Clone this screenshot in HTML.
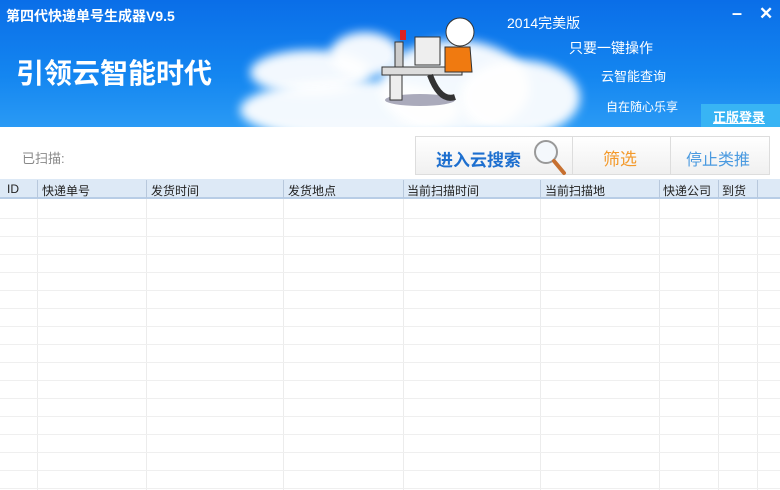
<!DOCTYPE html><html><head><meta charset="utf-8"><style>
*{margin:0;padding:0;box-sizing:border-box}
body{width:780px;height:490px;overflow:hidden;background:#fff;font-family:"Liberation Sans","Noto Sans CJK SC",sans-serif;position:relative}
.banner{position:absolute;left:0;top:0;width:780px;height:127px;background:linear-gradient(180deg,#0a6ee8 0%,#1486f0 60%,#2a9af5 100%);overflow:hidden}
.t{position:absolute;color:#fff;white-space:nowrap}
.cloud{position:absolute;background:#fff;border-radius:50%;filter:blur(5px);opacity:.95}
.hdr{position:absolute;top:179px;left:0;width:780px;height:20px;background:#dde9f6;border-bottom:2px solid #b8cde6;font-size:12px;color:#222}
.hdr span{position:absolute;top:3px}
.vl{position:absolute;top:199px;width:1px;height:291px;background:#ececec}
.hl{position:absolute;left:0;width:780px;height:1px;background:#efefef}
.hv{position:absolute;top:180px;width:1px;height:18px;background:#b8c8dc}
</style></head><body>
<div class="banner">
<div class="cloud" style="left:250px;top:50px;width:120px;height:45px"></div>
<div class="cloud" style="left:330px;top:32px;width:70px;height:45px"></div>
<div class="cloud" style="left:240px;top:80px;width:220px;height:60px"></div>
<div class="cloud" style="left:380px;top:40px;width:150px;height:95px"></div>
<div class="cloud" style="left:460px;top:60px;width:120px;height:75px"></div>
<svg style="position:absolute;left:380px;top:12px" width="100" height="95" viewBox="0 0 100 95">
<ellipse cx="40" cy="88" rx="35" ry="6" fill="#aab"/>
<rect x="2" y="55" width="80" height="8" fill="#ddd" stroke="#333"/>
<rect x="35" y="25" width="25" height="28" fill="#eee" stroke="#333"/>
<rect x="15" y="30" width="8" height="25" fill="#ccc" stroke="#333"/>
<rect x="20" y="18" width="6" height="10" fill="#d22"/>
<circle cx="80" cy="20" r="14" fill="#fff" stroke="#333"/>
<path d="M65 35 L90 35 L92 60 L65 60Z" fill="#f07a10" stroke="#333"/>
<rect x="10" y="63" width="12" height="25" fill="#eee" stroke="#333"/>
<path d="M50 63 Q60 90 75 85" stroke="#333" stroke-width="6" fill="none"/>
</svg>
<div class="t" style="left:6px;top:6px;font-size:14px;font-weight:bold">第四代快递单号生成器V9.5</div>
<div class="t" style="left:16px;top:52px;font-size:28px;font-weight:bold">引领云智能时代</div>
<div class="t" style="left:507px;top:13px;font-size:14px">2014完美版</div>
<div class="t" style="left:569px;top:38px;font-size:14px">只要一键操作</div>
<div class="t" style="left:601px;top:66px;font-size:13px">云智能查询</div>
<div class="t" style="left:606px;top:98px;font-size:12px">自在随心乐享</div>
<div class="t" style="left:732px;top:3px;font-size:18px;font-weight:bold">–</div>
<div class="t" style="left:759px;top:4px;font-size:17px;font-weight:bold">✕</div>
<div style="position:absolute;left:701px;top:104px;width:79px;height:23px;background:#38b4f4"></div>
<div class="t" style="left:713px;top:107px;font-size:13px;font-weight:bold;text-decoration:underline">正版登录</div>
</div>
<div class="t" style="left:22px;top:148px;font-size:13px;color:#888">已扫描:</div>
<div style="position:absolute;left:415px;top:136px;width:355px;height:39px;border:1px solid #ddd;background:linear-gradient(#fff,#f0f0f0)"></div>
<div style="position:absolute;left:572px;top:137px;width:1px;height:37px;background:#ddd"></div>
<div style="position:absolute;left:670px;top:137px;width:1px;height:37px;background:#ddd"></div>
<div class="t" style="left:436px;top:146px;font-size:17px;font-weight:bold;color:#1d6fcf">进入云搜索</div>
<svg style="position:absolute;left:532px;top:136px" width="36" height="40"><circle cx="14" cy="16" r="11" fill="#f4f8fc" stroke="#999" stroke-width="2"/><path d="M22 25 L32 37" stroke="#c77030" stroke-width="4" stroke-linecap="round"/></svg>
<div class="t" style="left:603px;top:145px;font-size:17px;color:#f39a2c">筛选</div>
<div class="t" style="left:686px;top:146px;font-size:16px;color:#4a9ae0">停止类推</div>
<div class="hdr">
<span style="left:7px">ID</span><span style="left:42px">快递单号</span><span style="left:151px">发货时间</span><span style="left:288px">发货地点</span><span style="left:407px">当前扫描时间</span><span style="left:545px">当前扫描地</span><span style="left:663px">快递公司</span><span style="left:722px">到货</span>
</div>
<div class="hv" style="left:37px"></div><div class="hv" style="left:146px"></div><div class="hv" style="left:283px"></div><div class="hv" style="left:403px"></div><div class="hv" style="left:540px"></div><div class="hv" style="left:659px"></div><div class="hv" style="left:718px"></div><div class="hv" style="left:757px"></div>
<div class="vl" style="left:37px"></div><div class="vl" style="left:146px"></div><div class="vl" style="left:283px"></div><div class="vl" style="left:403px"></div><div class="vl" style="left:540px"></div><div class="vl" style="left:659px"></div><div class="vl" style="left:718px"></div><div class="vl" style="left:757px"></div>
<div class="hl" style="top:218px"></div><div class="hl" style="top:236px"></div><div class="hl" style="top:254px"></div><div class="hl" style="top:272px"></div><div class="hl" style="top:290px"></div><div class="hl" style="top:308px"></div><div class="hl" style="top:326px"></div><div class="hl" style="top:344px"></div><div class="hl" style="top:362px"></div><div class="hl" style="top:380px"></div><div class="hl" style="top:398px"></div><div class="hl" style="top:416px"></div><div class="hl" style="top:434px"></div><div class="hl" style="top:452px"></div><div class="hl" style="top:470px"></div><div class="hl" style="top:488px"></div>
</body></html>
